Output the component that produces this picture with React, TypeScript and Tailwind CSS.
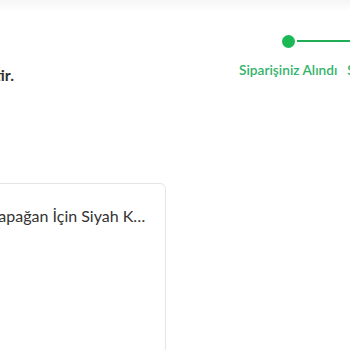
import React from "react";

const steps = [
  { label: "Siparişiniz Alındı", done: true },
  { label: "Siparişiniz Hazırlanıyor", done: false },
];

const Stepper = () => {
  return (
    <div className="flex gap-[10px]">
      {steps.map((step, i) => (
        <div key={i} className="relative flex flex-col items-center">
          <div className="relative flex h-[14px] items-center">
            <span className="z-10 block h-[13px] w-[13px] rounded-full bg-[#1bb954]" />
          </div>
          {i < steps.length - 1 && (
            <span className="absolute left-1/2 top-[6px] ml-[9px] h-[2px] w-[200px] bg-[#1fae56]" />
          )}
          <p className="mt-[14px] whitespace-nowrap text-[13.7px] font-semibold leading-[16px] text-[#33b36a]">
            {step.label}
          </p>
        </div>
      ))}
    </div>
  );
};

export default function App() {
  return (
    <div
      className="h-[350px] w-[350px] overflow-hidden bg-white"
      style={{ fontFamily: "Lato, 'Noto Sans', sans-serif" }}
    >
      <div className="h-[12px] bg-gradient-to-b from-[#f6f6f6] to-white" />

      <div className="flex items-start pt-[22px]">
        <div className="flex w-[14px] justify-end pt-[31px]">
          <h2 className="whitespace-nowrap text-[16px] font-bold leading-[19px] text-[#333]">
            Siparişiniz başarıyla teslim edilmiştir.
          </h2>
        </div>
        <div className="ml-[225px]">
          <Stepper />
        </div>
      </div>

      <div className="ml-[-104px] mt-[99px] flex h-[200px] w-[270px] gap-[12px] rounded-[6px] border border-[#e6e6e6] pl-[16px] pr-[15px] pt-[22px]">
        <div className="h-[64px] w-[64px] shrink-0 rounded bg-[#f2f2f2]" />
        <p className="min-w-0 flex-1 truncate text-[16px] leading-[20px] text-[#333]">
          Papağan İçin Siyah Kafes Örtüsü
        </p>
      </div>
    </div>
  );
}
